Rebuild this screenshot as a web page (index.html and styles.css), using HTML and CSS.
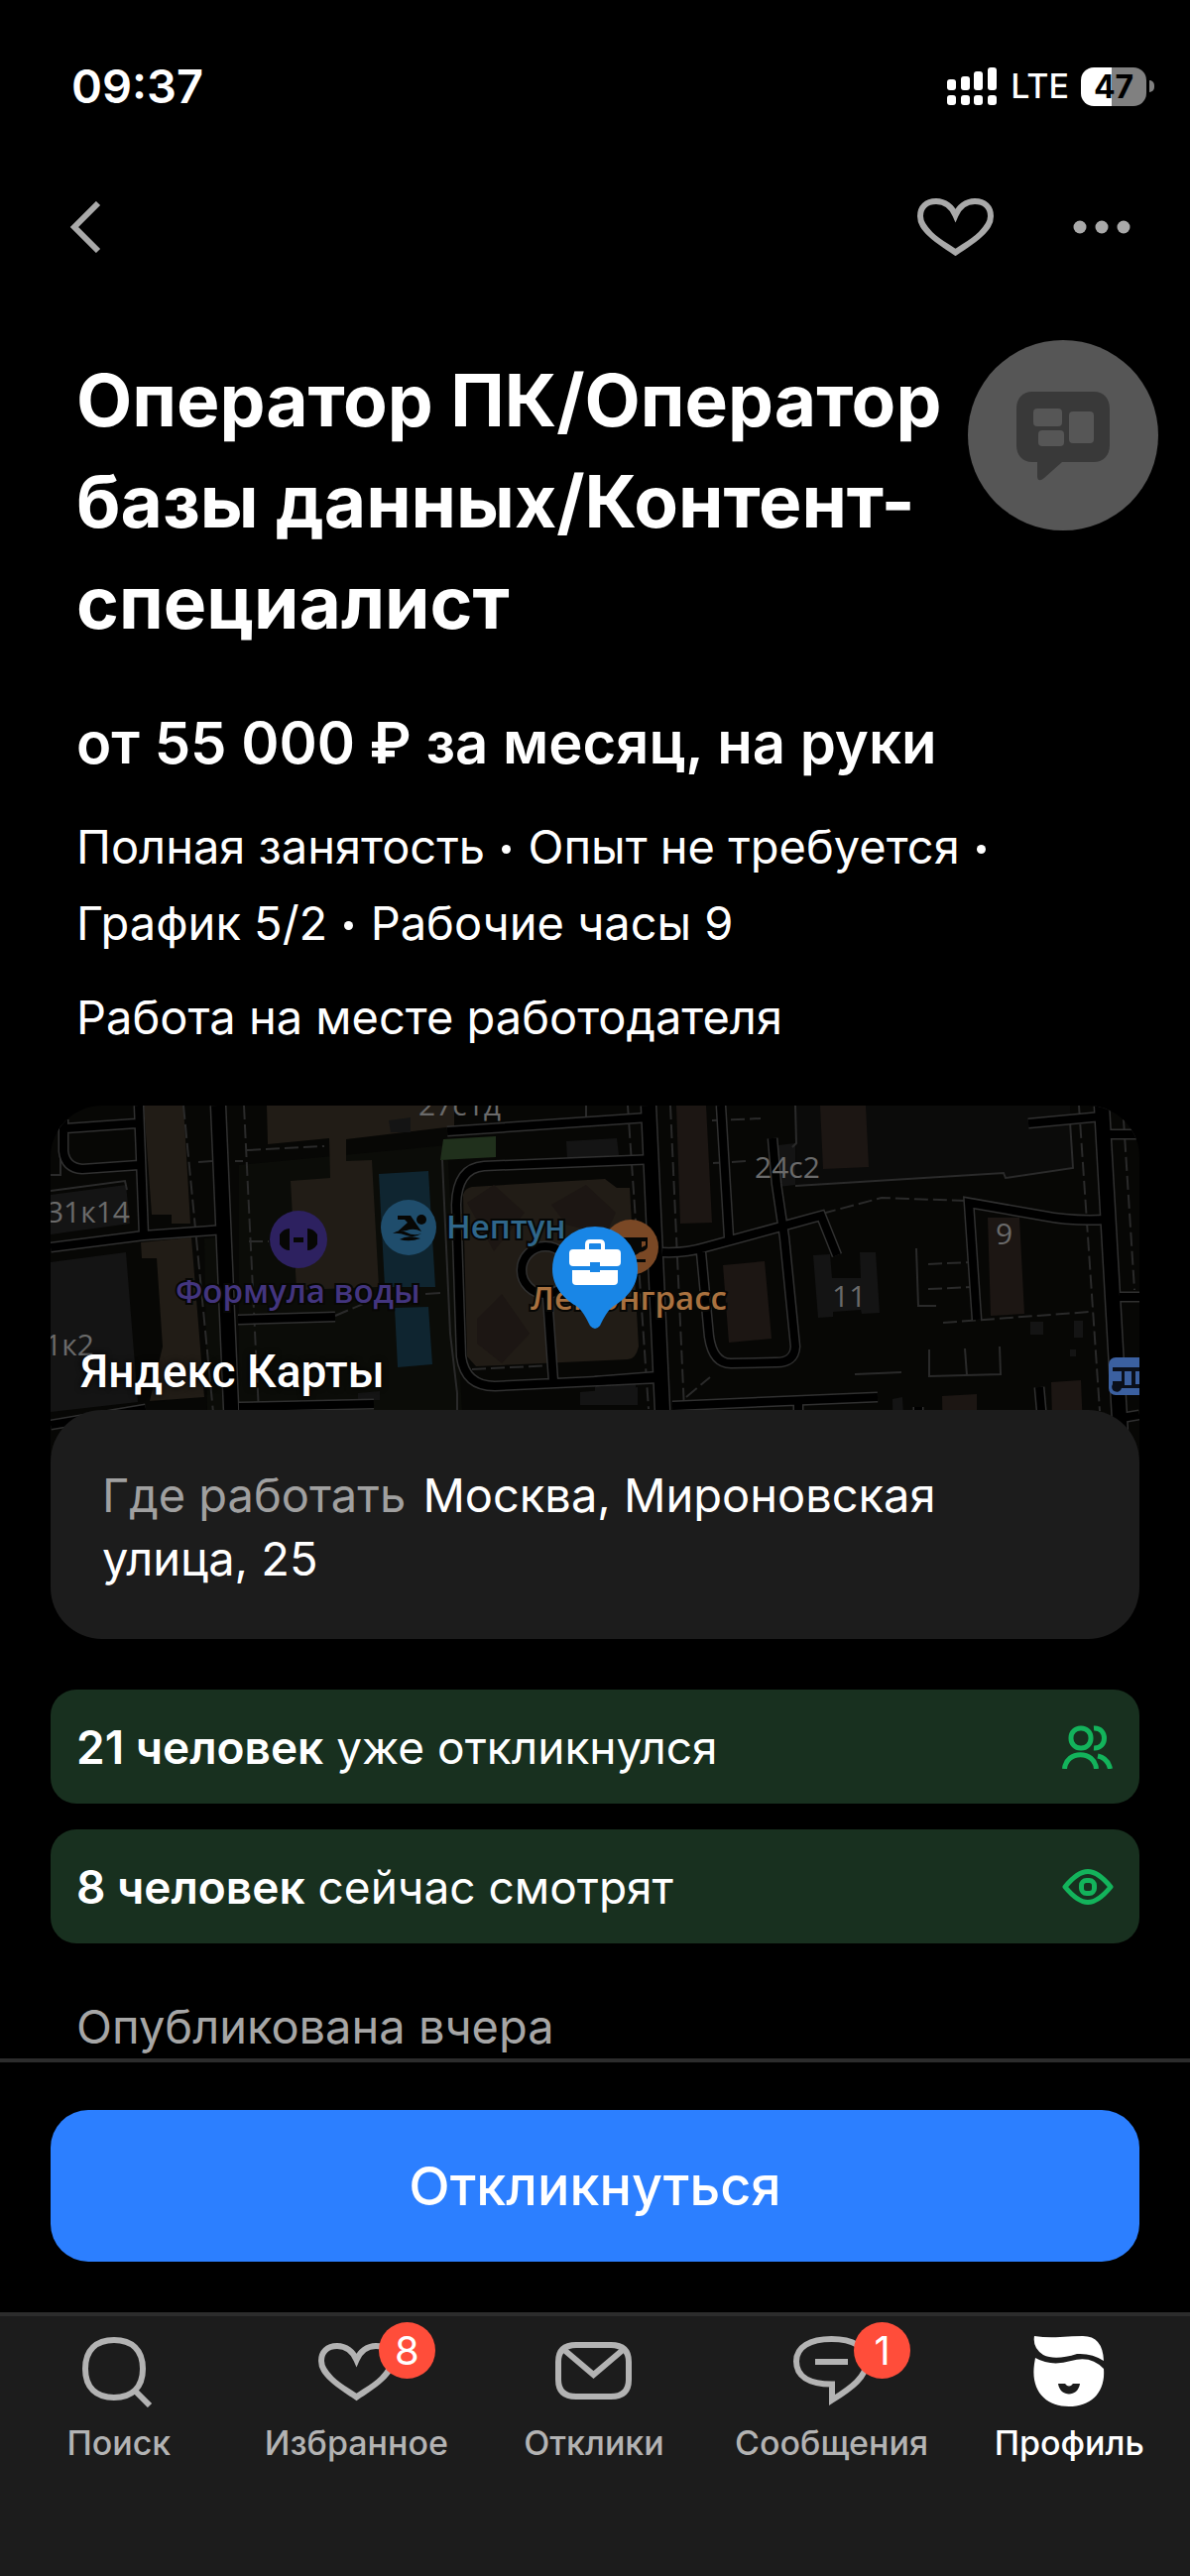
FILE: index.html
```html
<!DOCTYPE html>
<html lang="ru">
<head>
<meta charset="utf-8">
<meta name="viewport" content="width=device-width, initial-scale=1">
<title>Оператор ПК/Оператор базы данных/Контент-специалист</title>
<link rel="stylesheet" href="styles.css">
</head>
<body>
<div class="screen">
  <div class="status">
    <span class="status-time">09:37</span>
    <div class="status-right">
      <svg class="signal" width="50" height="38" viewBox="0 0 50 38" aria-hidden="true">
        <g fill="#fff">
          <rect x="0" y="12" width="9" height="11" rx="3"/><rect x="14" y="9" width="9" height="14" rx="3"/><rect x="27" y="4" width="9" height="19" rx="3"/><rect x="41" y="0" width="9" height="23" rx="3"/>
          <rect x="0" y="28" width="9" height="10" rx="3"/><rect x="14" y="28" width="9" height="10" rx="3"/><rect x="27" y="28" width="9" height="10" rx="3"/><rect x="41" y="28" width="9" height="10" rx="3"/>
        </g>
      </svg>
      <span class="network">LTE</span>
      <div class="battery"><span>47</span></div>
    </div>
  </div>

  <header class="toolbar">
    <button class="icon-button" aria-label="Назад">
      <svg width="32" height="52" viewBox="0 0 32 52"><path d="M29 2 5 26 29 50" fill="none" stroke="#a9a9a9" stroke-width="6"/></svg>
    </button>
    <div class="toolbar-actions">
      <button class="icon-button" aria-label="В избранное">
        <svg width="77" height="58" viewBox="0 0 77 58"><path d="M38.500 54.500C31 49 21 44 13 36C7 30 3 25 3 18C3 9 9 3 19 3C28 3 35 9 38.500 17C42 9 49 3 58 3C68 3 74 9 74 18C74 25 70 30 64 36C56 44 46 49 38.500 54.500Z" fill="none" stroke="#a9a9a9" stroke-width="6"/></svg>
      </button>
      <button class="icon-button" aria-label="Ещё">
        <svg width="58" height="14" viewBox="0 0 58 14" fill="#a9a9a9"><circle cx="7" cy="7" r="6.500"/><circle cx="29" cy="7" r="6.500"/><circle cx="51" cy="7" r="6.500"/></svg>
      </button>
    </div>
  </header>

  <main class="content">
    <button class="float-button" aria-label="Оставить отзыв">
      <svg width="94" height="90" viewBox="0 0 94 90">
        <path d="M16 0H78C88 0 94 7 94 17V54C94 64 88 71 78 71H46L28 87Q22 92 21 86V71H16C6 71 0 64 0 54V17C0 7 6 0 16 0Z" fill="#393939"/>
        <g fill="#565656"><rect x="17" y="17" width="29" height="18" rx="4"/><rect x="53" y="20" width="25" height="32" rx="4"/><rect x="22" y="39" width="26" height="16" rx="4"/></g>
      </svg>
    </button>

    <section class="summary">
      <h1>Оператор ПК/Оператор базы данных/Контент-специалист</h1>
      <p class="salary">от 55 000 ₽ за месяц, на руки</p>
      <p class="terms">Полная занятость <i></i> Опыт не требуется <i></i> График 5/2 <i></i> Рабочие часы 9</p>
      <p class="terms place">Работа на месте работодателя</p>
    </section>

    <section class="location">
      <div class="map">
        <svg class="map-picture" viewBox="0 0 1098 351" preserveAspectRatio="xMidYMid slice" role="img" aria-label="Карта">
          <defs>
            <g id="wide-roads"><path d="M169 0 184 351M603 0 619 351M1060 0 1080 351"/></g>
            <g id="roads">
              <path d="M89 0 94 131M0 143 94 131 176 125M15 23 86 18M13 14V46Q15 63 32 64L89 60M189 216 287 213M190 304 326 301M0 322 96 306"/>
              <path d="M400 26 603 12M612 54 437 61Q410 63 409 100L414 253Q418 283 448 283L614 275M501 192 507 278"/>
              <path d="M676 0 684 133M617 148Q640 149 660 143L777 111 793 151M728 33 732 79 740 133 751 243Q750 260 730 259L686 260Q668 260 664 233L656 148"/>
              <path d="M934 216 926 98 1000 111Q1030 117 1065 115M986 18 1060 11M1063 29H1098M1078 193H1098M627 303 834 294M754 301V351M549 278 612 273M875 304V351M997 284 1003 351M1080 315 1098 312"/>
              <circle cx="499" cy="166" r="24"/>
            </g>
          </defs>
          <rect width="1098" height="351" fill="#070705"/>
          <path d="M190 60 400 40 415 308H190ZM155 134 170 133 180 308H158Z" fill="#0b0c08"/>
          <path d="M752 0H1028L1031 63 963 73 961 68 751 81Z" fill="#0b0b0a"/>
          <g fill="#211c16">
            <path d="M94 0H134L141 119H122V110H102ZM91 138 142 133 155 294 100 298 113 243 107 154H92Z"/>
            <path d="M218 0H407V21L298 34V56L324 55 331 183 248 186 242 76 282 73 281 33 219 39Z"/>
            <path d="M416 90Q418 83 425 82L559 74 571 83H584L593 243Q590 256 582 256L429 263 420 253Z"/>
          </g>
          <g fill="#1c1613">
            <path d="M631 0H661L667 118 635 119ZM776 0H822L825 62 779 64ZM678 161 720 157 727 235 684 239ZM945 113H977L982 210 948 212ZM899 293 934 291V351H900ZM1009 279 1039 277 1042 351H1011Z"/>
            <path d="M420 98 447 80 478 108 447 147ZM505 100 540 80 570 108 560 130 520 120ZM430 215 455 190 483 230 455 260 430 240Z"/>
          </g>
          <g fill="#141414">
            <path d="M0 158 76 148 88 299 0 309ZM0 90 76 80 80 119 0 130ZM341 15 363 12V27H343ZM520 36 571 33 573 50 521 54ZM734 40 751 38V80L734 82ZM549 284 590 280V300H549ZM534 289 592 284V302H534ZM310 290 332 288V297H310ZM849 296 859 294 862 351H850ZM988 218H1001V231H988ZM1032 217H1041V234H1032ZM1028 246H1034V253H1028Z"/>
            <path d="M769 151 786 150 788 174H817L816 148H832L836 209 818 210 817 206 789 208V213L774 214Z"/>
          </g>
          <path d="M396 34 449 31V52L393 55Z" fill="#20301c"/>
          <path d="M331 69 381 66 388 183H337ZM347 204 381 203 385 261 350 264Z" fill="#0f2530"/>
          <g class="map-lines">
            <path d="M751 81 961 68 963 73 1031 63 1028 16M751 0 752 38 748 42M873 144 875 202H893M886 246V273L958 271 957 243M922 245 924 272M811 271 858 269M0 70H10V20M0 86 75 76 77 85M395 55 403 230 410 290V351M149 57 163 56M186 56 194 56M378 190 393 189"/>
            <path class="dash" d="M134 0 168 351M195 0 212 351M625 0 641 351M582 0 603 306M1037 0 1058 308M1082 14 1093 186M198 45 276 41M778 109 838 93 923 96M900 219 1048 208M885 160 928 158M885 185 931 183M667 15 716 13M668 58 702 56M641 294 665 274M200 137 220 137M287 212 320 198M425 266 505 262M540 0V16"/>
          </g>
          <use href="#roads" class="road-edge"/><use href="#wide-roads" class="wide-edge"/>
          <use href="#roads" class="road"/><use href="#wide-roads" class="wide"/>
          <g class="houses">
            <text x="80" y="118" text-anchor="end">31к14</text><text x="44" y="252" text-anchor="end">1к2</text><text x="371" y="10">27с1д</text>
            <text x="710" y="73">24с2</text><text x="953" y="140">9</text><text x="788" y="203">11</text>
          </g>
          <circle cx="250" cy="135" r="29" fill="#2d2160"/>
          <path d="M231 130Q235 124 241 124V146Q235 146 231 140ZM269 130Q265 124 259 124V146Q265 146 269 140ZM245 133H255V138H245Z" fill="#070705"/>
          <circle cx="361" cy="123" r="28" fill="#1f4d6c"/>
          <circle cx="374" cy="115" r="5" fill="#070705"/>
          <path d="M350 111H363L374 127Q366 123 359 126L350 127 360 118 357 115H350ZM345 129Q352 124 359 128T374 129Q367 134 359 131T345 129ZM352 135Q360 130 373 134Q362 138 352 135Z" fill="#070705"/>
          <circle cx="585" cy="143" r="28" fill="#7a4825"/>
          <path d="M575 133H602V142Q602 146 594 148Q588 154 578 150ZM596 137V143L600 141V137ZM578 155H600V158H578Z" fill="#070705" fill-rule="evenodd"/>
          <g class="places">
            <text x="399" y="134" fill="#2f668a">Нептун</text>
            <text x="126" y="199" fill="#43357f">Формула воды</text>
            <text x="484" y="206" fill="#a9713f">Лемонграсс</text>
          </g>
          <path d="M549 122A43 43 0 0 1 592 165C592 183 580 195 568 202C562 206 558 214 554 222Q549 228 544 222C540 214 536 206 530 202C518 195 506 183 506 165A43 43 0 0 1 549 122Z" fill="#1986e6"/>
          <path d="M541 147V140Q541 137 544 137H554Q557 137 557 140V147" fill="none" stroke="#fff" stroke-width="4"/>
          <path d="M527 145H571Q575 145 575 149V158Q575 162 571 162H554V158H544V162H527Q523 162 523 158V149Q523 145 527 145ZM526 166H544V168H554V166H572V177Q572 181 568 181H530Q526 181 526 177Z" fill="#fff"/>
          <rect x="1067" y="254" width="44" height="38" rx="7" fill="#3b60a0"/>
          <path d="M1071 264H1098V268H1094V281H1098V285H1080A5 5 0 1 1 1071 281V278H1080V268H1071ZM1083 268V282H1090V268Z" fill="#0a0f1a" fill-rule="evenodd"/>
        </svg>
        <a class="map-brand" href="#map">Яндекс Карты</a>
      </div>
      <p class="address"><span>Где работать</span> Москва, Мироновская улица, 25</p>
    </section>

    <div class="stats">
      <p class="stat"><span><b>21 человек</b> уже откликнулся</span>
        <svg width="52" height="44" viewBox="0 0 52 44" fill="none" stroke="#13b35b" stroke-width="5"><rect x="9" y="3" width="20" height="20" rx="9.500"/><path d="M32 3C46 2 46 24 32 23M2.500 44C4 25 33 25 34.500 44M36 31Q46 33 48.500 44"/></svg>
      </p>
      <p class="stat"><span><b>8 человек</b> сейчас смотрят</span>
        <svg width="52" height="36" viewBox="0 0 52 36" fill="none" stroke="#13b35b" stroke-width="5"><path d="M3 18C12 7 20 2.500 26 2.500S40 7 49 18C40 29 32 33.500 26 33.500S12 29 3 18Z" stroke-linejoin="round"/><rect x="19.500" y="11.500" width="13" height="13" rx="5"/></svg>
      </p>
    </div>
    <p class="published">Опубликована вчера</p>
  </main>

  <div class="apply"><button class="apply-button">Откликнуться</button></div>

  <nav class="tabs">
    <a href="#search"><span class="tab-icon">
      <svg width="74" height="72" viewBox="2 0 74 72"><path d="M34 4C52 4 63 14 63 33S52 62 34 62S5 52 5 33S16 4 34 4ZM54 54 70 70" /></svg></span>Поиск</a>
    <a href="#favorites"><span class="tab-icon">
      <svg width="77" height="72" viewBox="0 -7 77 72"><path d="M38.500 54.500C31 49 21 44 13 36C7 30 3 25 3 18C3 9 9 3 19 3C28 3 35 9 38.500 17C42 9 49 3 58 3C68 3 74 9 74 18C74 25 70 30 64 36C56 44 46 49 38.500 54.500Z"/></svg><b class="badge">8</b></span>Избранное</a>
    <a href="#responses"><span class="tab-icon">
      <svg width="77" height="72" viewBox="0 0 77 72"><path d="M21 9H56Q74 9 74 26V44Q74 61 56 61H21Q3 61 3 44V26Q3 9 21 9ZM9 14 38.500 39 68 14"/></svg></span>Отклики</a>
    <a href="#messages"><span class="tab-icon">
      <svg width="77" height="72" viewBox="0 0 77 72"><path d="M38.500 3C60 3 74 11 74 25C74 41 59 52 39 64.500V48.500C15 48.500 3 40 3 25.500C3 11 17 3 38.500 3ZM22 26H55"/></svg><b class="badge">1</b></span>Сообщения</a>
    <a class="active" href="#profile" aria-current="page"><span class="tab-icon">
      <svg width="72" height="72" viewBox="0 0 72 72"><path class="solid" d="M1 0Q14 2 27 1T50 0Q70 0 71 25Q59 17 44 18Q22 25 10 19Q-1 12 1 0ZM2 22Q18 31 38 25Q58 19 71 33C73 57 58 71 36 71C13 71-3 56 1 28ZM25 48C27 62 45 62 47 48H40Q36 53 32 48Z"/></svg></span>Профиль</a>
  </nav>
</div>
</body>
</html>
```
FILE: styles.css
```css
* { box-sizing: border-box; }
body { margin: 0; background: #000; color: #fff; font-family: Inter, "Liberation Sans", sans-serif; }
h1, p { margin: 0; }
button { border: 0; padding: 0; background: none; color: inherit; font: inherit; display: block; }
svg { display: block; }
a { color: inherit; text-decoration: none; }

.screen { min-height: 100vh; display: flex; flex-direction: column; }

.status { display: flex; justify-content: space-between; align-items: center; padding: 58px 36px 0 72px; height: 116px; }
.status-time { font-size: 47px; font-weight: 600; line-height: 58px; }
.status-right { display: flex; align-items: center; }
.network { margin: 0 12px 0 14px; font-size: 34px; font-weight: 500; line-height: 40px; }
.battery { position: relative; width: 66px; height: 39px; margin-right: 8px; border-radius: 13px; background: linear-gradient(90deg, #fff 31px, #808080 31px); color: #000; font-size: 32px; font-weight: 700; line-height: 39px; text-align: center; }
.battery::after { content: ""; position: absolute; left: 69px; top: 13px; width: 5px; height: 12px; border-radius: 0 5px 5px 0; background: #808080; }

.toolbar { display: flex; justify-content: space-between; align-items: center; height: 226px; padding: 0 60px 0 70px; }
.toolbar-actions { display: flex; align-items: center; gap: 80px; }

.content { position: relative; flex: 1; }
.float-button { position: absolute; right: 32px; top: 1px; width: 192px; height: 192px; padding-top: 2px; border-radius: 50%; background: #565656; display: grid; place-items: center; }

.summary { padding: 11px 77px 0; }
h1 { max-width: 900px; font-size: 73px; font-weight: 700; line-height: 102px; }
.salary { margin-top: 51px; font-size: 58px; font-weight: 600; line-height: 78px; }
.terms { margin-top: 27px; font-size: 47px; line-height: 77px; }
.terms i { display: inline-block; width: 9px; height: 9px; margin: 0 4px; border-radius: 50%; background: #fff; vertical-align: 10px; }
.place { margin-top: 18px; }

.location { margin: 51px 51px 0; }
.map { position: relative; border-radius: 52px 52px 0 0; overflow: hidden; }
.map-picture { width: 100%; height: 351px; }
.map-lines path { fill: none; stroke: #2a2a2a; stroke-width: 2; }
.map-lines .dash { stroke-dasharray: 14 5; }
.road-edge, .wide-edge { fill: none; stroke: #303030; }
.road, .wide { fill: none; stroke: #000; }
.road-edge { stroke-width: 11; }
.road { stroke-width: 8; }
.wide-edge { stroke-width: 17; }
.wide { stroke-width: 14; }
.houses, .places { font-family: "Open Sans", "Noto Sans", sans-serif; }
.houses { font-size: 30px; fill: #6a6a6a; }
.places { font-size: 33px; font-weight: 600; paint-order: stroke; stroke: #070705; stroke-width: 4px; }
.map-brand { position: absolute; left: 30px; bottom: 53px; font-family: Roboto, "Open Sans", sans-serif; font-size: 46px; font-weight: 500; line-height: 60px; text-shadow: 0 0 6px #000; }
.address { position: relative; margin-top: -44px; padding: 54px 120px 49px 52px; border-radius: 52px; background: #1c1c1c; font-size: 47px; line-height: 64px; }
.address span { margin-right: 4px; color: #a0a0a0; }

.stats { display: flex; flex-direction: column; gap: 26px; margin: 51px 51px 0; }
.stat { display: flex; justify-content: space-between; align-items: center; min-height: 115px; padding: 0 26px; border-radius: 26px; background: #18301f; font-size: 46px; line-height: 64px; }
.stat b { font-weight: 600; }
.published { margin-top: 52px; padding: 0 77px; color: #a6a6a6; font-size: 47px; line-height: 64px; }

.apply { padding: 48px 51px 51px; border-top: 4px solid #2c2c2c; background: #000; }
.apply-button { width: 100%; height: 153px; border-radius: 38px; background: #2c7fff; font-size: 54px; font-weight: 500; }

.tabs { display: grid; grid-template-columns: repeat(5, 1fr); height: 266px; padding: 20px 2px 0 0; border-top: 4px solid #2c2c2c; background: #1c1c1c; color: #b3b3b3; font-size: 34px; font-weight: 500; line-height: 40px; text-align: center; }
.tabs a { display: flex; flex-direction: column; align-items: center; gap: 16px; }
.tab-icon { position: relative; }
.tab-icon path { fill: none; stroke: #b3b3b3; stroke-width: 6; }
.tab-icon .solid { fill: #fff; fill-rule: evenodd; stroke: none; }
.tabs .active { color: #fff; }
.badge { position: absolute; left: 61px; top: -14px; width: 57px; height: 57px; border-radius: 50%; background: #ff4d3a; color: #fff; font-size: 40px; font-weight: 400; line-height: 57px; }
```
